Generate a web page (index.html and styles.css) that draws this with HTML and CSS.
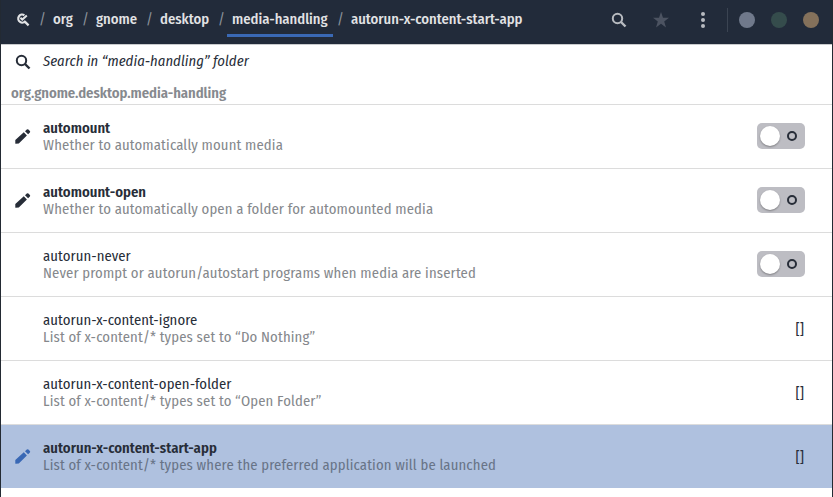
FILE: index.html
```html
<!DOCTYPE html>
<html lang="en">
<head>
<meta charset="utf-8">
<title>dconf Editor</title>
<link rel="stylesheet" href="styles.css">
</head>
<body>
<svg class="defs" width="0" height="0">
  <symbol id="search" viewBox="0 0 16 16"><circle cx="6.5" cy="6.5" r="4.7" fill="none" stroke="currentColor" stroke-width="2"/><path d="M10 10l4.5 4.5" stroke="currentColor" stroke-width="2.4"/></symbol>
  <symbol id="pencil" viewBox="0 0 16 16"><path d="M.8 15.7Q.3 15.7.3 15.2V12L8.8 4.3 11.9 7.4 3.8 15.5zM10 3.2L11.8 1.5Q12.6.9 13.4 1.6L14.9 3.1Q15.5 3.8 14.9 4.6L13.1 6.3z" fill="currentColor"/></symbol>
</svg>
<div class="window">
  <header class="bar">
    <nav class="path">
      <svg class="root" viewBox="0 0 14 14"><path d="M8.4 2.2A4 4 0 1 0 9.6 7.8M8.8 8.6L12.6 12.4" fill="none" stroke="currentColor" stroke-width="2.2"/><path d="M4.4 4.8L6.3 6.6 10.8 2.4" fill="none" stroke="currentColor" stroke-width="2"/></svg>
      <i>/</i><span class="org">org</span><i>/</i><span class="gnome">gnome</span><i>/</i><span class="desktop">desktop</span><i>/</i><span class="current">media-handling</span><i>/</i><span class="leaf">autorun-x-content-start-app</span>
    </nav>
    <div class="actions">
      <svg class="find"><use href="#search"/></svg>
      <svg class="star" viewBox="0 0 16 16"><path d="M8 0L10 5.7H16L11.2 9.4 13 15.4 8 11.8 3 15.4 4.8 9.4 0 5.7H6z" fill="currentColor"/></svg>
      <svg class="more" viewBox="0 0 4 16"><circle cx="2" cy="2" r="2"/><circle cx="2" cy="8" r="2"/><circle cx="2" cy="14" r="2"/></svg>
    </div>
    <div class="controls"><b class="min"></b><b class="max"></b><b class="close"></b></div>
  </header>
  <div class="search"><svg><use href="#search"/></svg><em>Search in “media-handling” folder</em></div>
  <h1>org.gnome.desktop.media-handling</h1>
  <ul>
    <li class="set"><svg><use href="#pencil"/></svg><div class="text"><p class="name">automount</p><p class="desc">Whether to automatically mount media</p></div><div class="switch"></div></li>
    <li class="set"><svg><use href="#pencil"/></svg><div class="text"><p class="name">automount-open</p><p class="desc">Whether to automatically open a folder for automounted media</p></div><div class="switch"></div></li>
    <li><div class="text"><p class="name">autorun-never</p><p class="desc">Never prompt or autorun/autostart programs when media are inserted</p></div><div class="switch"></div></li>
    <li><div class="text"><p class="name">autorun-x-content-ignore</p><p class="desc">List of x-content/* types set to “Do Nothing”</p></div><div class="value">[]</div></li>
    <li><div class="text"><p class="name">autorun-x-content-open-folder</p><p class="desc">List of x-content/* types set to “Open Folder”</p></div><div class="value">[]</div></li>
    <li class="set selected"><svg><use href="#pencil"/></svg><div class="text"><p class="name">autorun-x-content-start-app</p><p class="desc">List of x-content/* types where the preferred application will be launched</p></div><div class="value">[]</div></li>
  </ul>
</div>
</body>
</html>
```
FILE: styles.css
```css
*, ::before, ::after { box-sizing: border-box; margin: 0; padding: 0; }
body { height: 497px; overflow: hidden; background: #232a33; font: 14.667px/17px "Fira Sans Condensed", "Open Sans", sans-serif; font-stretch: 75%; color: #272d38; white-space: nowrap; }
svg { display: block; flex: none; width: 16px; height: 16px; }
.defs { position: absolute; width: 0; height: 0; }
.window { margin: 0 1px; height: 497px; background: #fff; }
.bar { display: flex; height: 45px; background: #222b3a; border-bottom: 1px solid #c9cbcd; color: #e2e3e5; }
.path { display: flex; height: 40px; line-height: 39px; padding-left: 15px; font-weight: 500; letter-spacing: -.03px; }
.path .root { width: 14px; height: 14px; margin-top: 13px; }
.path i { width: 5px; margin: 0 9px; font-style: normal; font-weight: 400; color: #8a9099; }
.path span { flex: none; }
.path .org { width: 20px; }
.path .gnome { width: 41px; }
.path .desktop { width: 49px; }
.path .current { width: 106px; height: 37px; margin: 0 -5px; padding-left: 5px; border-bottom: 3px solid #3a69b5; }
.actions { display: flex; width: 117px; margin-left: auto; height: 24px; margin-top: 8px; align-items: center; border-right: 1px solid #3b4452; color: #b8bbc0; }
.actions .star { margin-left: 26px; color: #4c5361; }
.actions .more { width: 4px; margin-left: 32px; fill: currentColor; }
.controls { display: flex; gap: 16px; margin: 12px 13px 0 11px; }
.controls b { width: 16px; height: 16px; border-radius: 50%; }
.min { background: #70798b; }
.max { background: #354c4c; }
.close { background: #84715b; }
.search { display: flex; height: 35px; padding: 9px 0 0 14px; }
.search em { margin: -1px 0 0 12px; letter-spacing: .04px; }
h1 { height: 25px; padding: 5px 0 0 10px; border-bottom: 1px solid #dcdcdc; font-size: inherit; font-weight: 600; letter-spacing: -.05px; color: #86898e; }
ul { list-style: none; }
li { display: flex; height: 64px; padding: 15px 27px 0 14px; border-bottom: 1px solid #dcdcdc; }
li svg { margin-top: 8px; }
.text { margin-left: 28px; }
li svg + .text { margin-left: 12px; }
.name { letter-spacing: .08px; }
.desc { color: #85888c; letter-spacing: .15px; }
.set .name { font-weight: 600; letter-spacing: .03px; }
.selected { height: 63px; background: #afc1df; border-bottom: 0; }
.selected svg { color: #3968b5; }
.selected .desc { color: #687487; }
.value { margin: 9px 1px 0 auto; }
.switch { display: flex; align-items: center; justify-content: space-between; width: 48px; height: 26px; margin: 3px 0 0 auto; padding: 0 8px 0 3px; border-radius: 5px; background: #bdbdc3; }
.switch::before { content: ""; width: 20px; height: 20px; border-radius: 50%; background: #fff; box-shadow: 0 1px 2px #0005; }
.switch::after { content: ""; width: 10px; height: 10px; border: 2px solid #272d38; border-radius: 50%; }
```
